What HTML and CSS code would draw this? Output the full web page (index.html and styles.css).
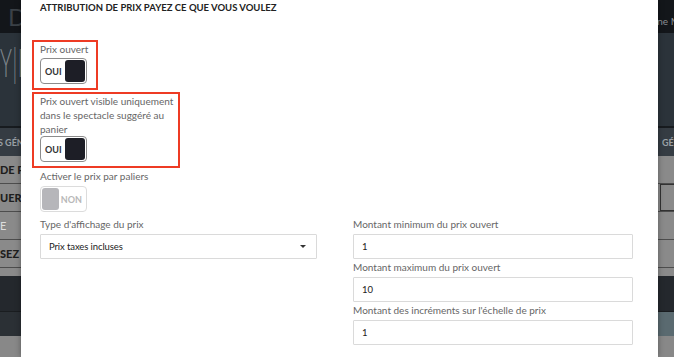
FILE: index.html
```html
<!DOCTYPE html>
<html lang="fr">
  <head>
    <meta charset="UTF-8" />
    <meta name="viewport" content="width=device-width, initial-scale=1.0" />
    <title>Attribution de prix</title>
    <link rel="stylesheet" href="styles.css">
  </head>
  <body>
    <div class="page">
      <div class="topbar">
        <span class="logo">D</span>
        <span class="user">Jane M</span>
      </div>
      <div class="hero"><span class="hero-title">Y|I</span></div>
      <div class="tabs">
        <span>S GÉNÉRAUX</span>
        <span>GÉ</span>
      </div>
      <div class="section">
        <div class="row"><span class="row-title">DE PRIX</span></div>
        <div class="row"><span class="row-title">UER CE</span><span class="row-box"></span></div>
        <div class="row"><span class="row-title light">E</span></div>
        <div class="row"><span class="row-title">SEZ DE</span></div>
        <div class="row-end"></div>
      </div>
      <div class="footer-dark"></div>
      <div class="footer-bar">
        <span class="footer-left"></span>
        <span class="footer-right"></span>
      </div>
      <div class="footer-gray"></div>
    </div>

    <div class="modal">
      <h2>Attribution de prix payez ce que vous voulez</h2>

      <div class="form-group highlight">
        <label>Prix ouvert</label>
        <div class="toggle on">
          <span class="toggle-text">OUI</span>
          <span class="knob"></span>
        </div>
      </div>

      <div class="form-group highlight wide">
        <label>Prix ouvert visible uniquement dans le spectacle suggéré au panier</label>
        <div class="toggle on">
          <span class="toggle-text">OUI</span>
          <span class="knob"></span>
        </div>
      </div>

      <div class="form-group plain">
        <label>Activer le prix par paliers</label>
        <div class="toggle off">
          <span class="knob"></span>
          <span class="toggle-text">NON</span>
        </div>
      </div>

      <div class="fields">
        <div class="col">
          <label>Type d'affichage du prix</label>
          <div class="select">
            <span>Prix taxes incluses</span>
            <span class="caret"></span>
          </div>
        </div>
        <div class="col">
          <label>Montant minimum du prix ouvert</label>
          <div class="input">1</div>
          <label>Montant maximum du prix ouvert</label>
          <div class="input">10</div>
          <label>Montant des incréments sur l'échelle de prix</label>
          <div class="input">1</div>
        </div>
      </div>
    </div>
  </body>
</html>
```

FILE: styles.css
```css
body {
  margin: 0;
  font-family: Lato, "Open Sans", sans-serif;
  background-color: #888888;
  overflow: hidden;
  height: 357px;
  position: relative;
}

/* dimmed page behind the modal */
.page {
  width: 674px;
}
.topbar {
  height: 33px;
  background-color: #13161a;
  display: flex;
  justify-content: space-between;
  align-items: center;
}
.logo {
  color: #3b4147;
  font-size: 24px;
  margin-left: 8px;
}
.user {
  color: #8a8f94;
  font-size: 10px;
  margin-right: -6px;
  margin-top: 8px;
}
.hero {
  height: 95px;
  background-color: #2b333a;
  border-bottom: 2px solid #171b1f;
  box-sizing: border-box;
}
.hero-title {
  display: inline-block;
  color: #7f868c;
  font-size: 40px;
  font-weight: 300;
  letter-spacing: 1px;
  padding-top: 5px;
  transform: scaleX(0.5);
  transform-origin: left;
}
.tabs {
  height: 28px;
  background-color: #353c43;
  display: flex;
  justify-content: space-between;
  align-items: center;
  color: #9aa0a6;
  font-size: 9px;
  font-weight: bold;
}
.tabs span:first-child {
  margin-left: -2px;
}
.tabs span:last-child {
  margin-right: -2px;
  width: 14px;
  overflow: hidden;
}
.section {
  background-color: #8a8a8a;
}
.row {
  height: 27px;
  border-bottom: 1px solid #4d4d4d;
  display: flex;
  justify-content: space-between;
  align-items: center;
}
.row-title {
  font-size: 11px;
  font-weight: 900;
  color: #1e1e1e;
}
.row-title.light {
  color: #dddddd;
  font-weight: normal;
}
.row-box {
  width: 18px;
  height: 25px;
  border: 1px solid #333;
  margin-right: -6px;
}
.row-end {
  height: 8px;
}
.footer-dark {
  height: 35px;
  background-color: #24282d;
  border-bottom: 1px solid #1a1d20;
}
.footer-bar {
  height: 24px;
  display: flex;
  justify-content: space-between;
}
.footer-left {
  width: 30px;
  background-color: #2b3035;
}
.footer-right {
  width: 30px;
  background-color: #5a6a70;
}
.footer-gray {
  height: 30px;
  background-color: #888888;
}

/* modal */
.modal {
  position: absolute;
  top: 0;
  left: 21px;
  width: 637px;
  height: 357px;
  box-sizing: border-box;
  background-color: #fff;
  padding: 0 25px 0 19px;
  box-shadow: 0 0 6px rgba(0, 0, 0, 0.35);
}
h2 {
  margin: 1px 0 25px;
  font-size: 9.5px;
  line-height: 14px;
  font-weight: 700;
  text-transform: uppercase;
  color: #222;
}
label {
  display: block;
  font-size: 10px;
  line-height: 14px;
  color: #666;
}
.form-group {
  width: fit-content;
}
.highlight {
  border: 2px solid #ee3b24;
  margin-left: -8px;
  padding: 0 8px 4px 6px;
}
.highlight label {
  margin-bottom: 2px;
}
.highlight.wide {
  margin-top: 2px;
  padding-right: 4px;
}
.highlight.wide label {
  width: 134px;
  margin-bottom: 0;
}
.plain {
  margin-top: 1px;
}
.plain label {
  margin-bottom: 3px;
}
.toggle {
  width: 47px;
  height: 26px;
  box-sizing: border-box;
  border-radius: 4px;
  padding: 1px;
  display: flex;
  align-items: center;
  justify-content: space-between;
}
.toggle.on {
  border: 1px solid #8c8c8c;
}
.toggle.off {
  border: 1px solid #dcdcdc;
}
.toggle-text {
  font-size: 9px;
  font-weight: bold;
  padding: 0 3px;
}
.on .toggle-text {
  color: #333;
}
.off .toggle-text {
  color: #b8b8b8;
  padding: 0 3px 0 2px;
}
.knob {
  width: 22px;
  height: 22px;
  border-radius: 3px;
}
.on .knob {
  background-color: #1d1e26;
}
.off .knob {
  background-color: #b6b6ba;
}
.fields {
  display: grid;
  grid-template-columns: 277px 280px;
  column-gap: 36px;
  margin-top: 5px;
}
.col label {
  margin-bottom: 3px;
}
.select,
.input {
  height: 25px;
  box-sizing: border-box;
  border: 1px solid #dadada;
  border-radius: 1px;
  font-size: 9.5px;
  letter-spacing: -0.1px;
  color: #222;
  display: flex;
  align-items: center;
  padding: 0 8px;
}
.input {
  margin-bottom: 1px;
}
.select {
  justify-content: space-between;
  padding-right: 10px;
}
.caret {
  width: 0;
  height: 0;
  border-left: 3px solid transparent;
  border-right: 3px solid transparent;
  border-top: 3px solid #333;
}
```
